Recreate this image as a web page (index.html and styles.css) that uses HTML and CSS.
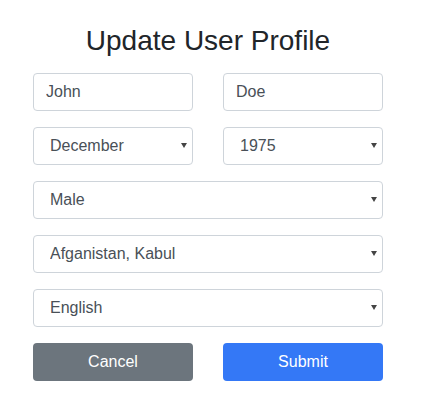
FILE: index.html
```html
<!DOCTYPE html>
<html lang="en">
<head>
<meta charset="utf-8">
<title>Update User Profile</title>
<link rel="stylesheet" href="styles.css">
</head>
<body>
<form class="profile">
  <h3 class="title">Update User Profile</h3>
  <div class="row">
    <input class="field" type="text" value="John">
    <input class="field" type="text" value="Doe">
  </div>
  <div class="row">
    <select class="field select">
      <option>December</option>
    </select>
    <select class="field select">
      <option>1975</option>
    </select>
  </div>
  <div class="row single">
    <select class="field select"><option>Male</option></select>
  </div>
  <div class="row single">
    <select class="field select"><option>Afganistan, Kabul</option></select>
  </div>
  <div class="row single">
    <select class="field select"><option>English</option></select>
  </div>
  <div class="row">
    <button type="button" class="btn btn-cancel">Cancel</button>
    <button type="button" class="btn btn-submit">Submit</button>
  </div>
</form>
</body>
</html>
```
FILE: styles.css
```css
html, body {
  margin: 0;
  padding: 0;
  background: #fff;
}
body {
  font-family: "Liberation Sans", Arial, sans-serif;
  color: #212529;
}
.profile {
  width: 350px;
  margin: 0 0 0 33px;
  padding-top: 24px;
  display: flex;
  flex-direction: column;
  gap: 16px;
}
.title {
  margin: 0 0 -1px 0;
  font-size: 28px;
  font-weight: 400;
  line-height: 1.2;
  text-align: center;
}
.row {
  display: grid;
  grid-template-columns: 160px 160px;
  column-gap: 30px;
}
.row.single {
  grid-template-columns: 350px;
}
.field {
  box-sizing: border-box;
  width: 100%;
  height: 38px;
  margin: 0;
  padding: 6px 12px;
  font-family: inherit;
  font-size: 16px;
  line-height: 1.5;
  color: #495057;
  background: #fff;
  border: 1px solid #ced4da;
  border-radius: 4px;
}
.select {
  -webkit-appearance: none;
  appearance: none;
  padding-left: 16px;
  padding-right: 20px;
  background: #fff url("data:image/svg+xml;utf8,<svg xmlns='http://www.w3.org/2000/svg' width='6' height='5' viewBox='0 0 6 5'><polygon points='0,0 6,0 3,5' fill='%23444'/></svg>") no-repeat right 5px center;
}
.btn {
  box-sizing: border-box;
  height: 38px;
  margin: 0;
  padding: 6px 12px;
  font-family: inherit;
  font-size: 16px;
  line-height: 1.5;
  color: #fff;
  border: 1px solid transparent;
  border-radius: 4px;
}
.btn-cancel {
  background: #6c757d;
}
.btn-submit {
  background: #3478f6;
}
```
